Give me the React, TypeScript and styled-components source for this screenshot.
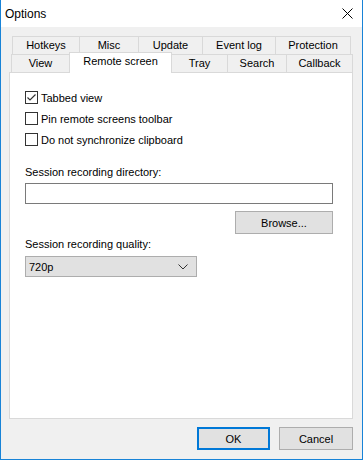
import * as React from 'react';
import styled, { createGlobalStyle } from 'styled-components';

const GlobalStyle = createGlobalStyle`
  html, body {
    margin: 0;
    padding: 0;
    background: #ffffff;
  }
  body {
    font-family: "Liberation Sans", Arial, sans-serif;
    font-size: 11px;
    color: #000000;
  }
`;

const Window = styled.div`
  width: 363px;
  height: 460px;
  box-sizing: border-box;
  border: 1px solid #1883d7;
  border-top: none;
  display: flex;
  flex-direction: column;
  background: #f0f0f0;
`;

const TitleBar = styled.div`
  height: 27px;
  flex: none;
  background: #ffffff;
  display: flex;
  align-items: center;
  justify-content: space-between;
  padding: 0 9px 0 4px;
  font-size: 12px;
`;

const Body = styled.div`
  flex: 1;
  display: flex;
  flex-direction: column;
  padding: 9px 9px 0 8px;
`;

const TabRow = styled.div<{ $indent: number }>`
  display: flex;
  height: 18px;
  padding-left: ${(p) => p.$indent}px;
  position: relative;
`;

const Tab = styled.div<{ $w: number; $active?: boolean }>`
  box-sizing: border-box;
  width: ${(p) => p.$w}px;
  height: ${(p) => (p.$active ? 21 : 19)}px;
  margin-top: ${(p) => (p.$active ? -2 : 0)}px;
  margin-right: -1px;
  border: 1px solid #d9d9d9;
  border-bottom: ${(p) => (p.$active ? 'none' : '1px solid #d9d9d9')};
  background: ${(p) => (p.$active ? '#ffffff' : '#f0f0f0')};
  display: flex;
  align-items: center;
  justify-content: center;
  line-height: 1;
  padding-bottom: ${(p) => (p.$active ? 3 : 1)}px;
  position: relative;
  z-index: ${(p) => (p.$active ? 2 : 1)};
`;

const Panel = styled.div`
  box-sizing: border-box;
  width: 344px;
  height: 347px;
  background: #ffffff;
  border: 1px solid #d9d9d9;
  padding: 18px 15px 0 15px;
  display: flex;
  flex-direction: column;
  position: relative;
  z-index: 1;
`;

const CheckRow = styled.label`
  display: flex;
  align-items: center;
  height: 13px;
  margin-bottom: 8px;
  gap: 3px;
`;

const Box = styled.span`
  box-sizing: border-box;
  width: 13px;
  height: 13px;
  border: 1px solid #333333;
  background: #ffffff;
  display: flex;
  align-items: center;
  justify-content: center;
`;

const FieldLabel = styled.div<{ $gap: number }>`
  margin-top: ${(p) => p.$gap}px;
  line-height: 14px;
`;

const TextInput = styled.div`
  box-sizing: border-box;
  height: 21px;
  margin-top: 4px;
  width: 308px;
  border: 1px solid #7a7a7a;
  background: #ffffff;
`;

const ButtonRow = styled.div`
  display: flex;
  justify-content: flex-end;
  width: 308px;
  margin-top: 7px;
`;

const Button = styled.div<{ $w: number; $default?: boolean }>`
  box-sizing: border-box;
  width: ${(p) => p.$w}px;
  height: 23px;
  background: #e1e1e1;
  border: ${(p) => (p.$default ? '2px solid #0078d7' : '1px solid #adadad')};
  display: flex;
  align-items: center;
  justify-content: center;
`;

const Select = styled.div`
  box-sizing: border-box;
  width: 172px;
  height: 21px;
  margin-top: 5px;
  background: #e1e1e1;
  border: 1px solid #adadad;
  display: flex;
  align-items: center;
  justify-content: space-between;
  padding: 0 8px 0 3px;
`;

const Footer = styled.div`
  display: flex;
  justify-content: flex-end;
  gap: 9px;
  padding: 8px 0 0 0;
`;

const row1 = [
  { label: 'Hotkeys', w: 68 },
  { label: 'Misc', w: 60 },
  { label: 'Update', w: 65 },
  { label: 'Event log', w: 74 },
  { label: 'Protection', w: 76 },
];

const row2 = [
  { label: 'View', w: 59 },
  { label: 'Remote screen', w: 103, active: true },
  { label: 'Tray', w: 57 },
  { label: 'Search', w: 60 },
  { label: 'Callback', w: 67 },
];

const Check: React.FC<{ checked?: boolean; label: string }> = ({ checked, label }) => (
  <CheckRow>
    <Box>
      {checked && (
        <svg width="11" height="11" viewBox="0 0 11 11">
          <path d="M1.5 5.5 L4 8 L9.5 2.5" fill="none" stroke="#333" strokeWidth="1.2" />
        </svg>
      )}
    </Box>
    <span>{label}</span>
  </CheckRow>
);

const App: React.FC = () => (
  <>
    <GlobalStyle />
    <Window>
      <TitleBar>
        <span>Options</span>
        <svg width="11" height="11" viewBox="0 0 11 11">
          <path d="M0.5 0.5 L10.5 10.5 M10.5 0.5 L0.5 10.5" stroke="#000" strokeWidth="1" />
        </svg>
      </TitleBar>
      <Body>
        <TabRow $indent={3}>
          {row1.map((t) => (
            <Tab key={t.label} $w={t.w}>
              {t.label}
            </Tab>
          ))}
        </TabRow>
        <TabRow $indent={2}>
          {row2.map((t) => (
            <Tab key={t.label} $w={t.w} $active={t.active}>
              {t.label}
            </Tab>
          ))}
        </TabRow>
        <Panel>
          <Check checked label="Tabbed view" />
          <Check label="Pin remote screens toolbar" />
          <Check label="Do not synchronize clipboard" />
          <FieldLabel $gap={11}>Session recording directory:</FieldLabel>
          <TextInput />
          <ButtonRow>
            <Button $w={98}>Browse...</Button>
          </ButtonRow>
          <FieldLabel $gap={3}>Session recording quality:</FieldLabel>
          <Select>
            <span>720p</span>
            <svg width="10" height="6" viewBox="0 0 10 6">
              <path d="M0.5 0.5 L5 5 L9.5 0.5" fill="none" stroke="#333" strokeWidth="1" />
            </svg>
          </Select>
        </Panel>
        <Footer>
          <Button $w={73} $default>OK</Button>
          <Button $w={74}>Cancel</Button>
        </Footer>
      </Body>
    </Window>
  </>
);

export default App;
